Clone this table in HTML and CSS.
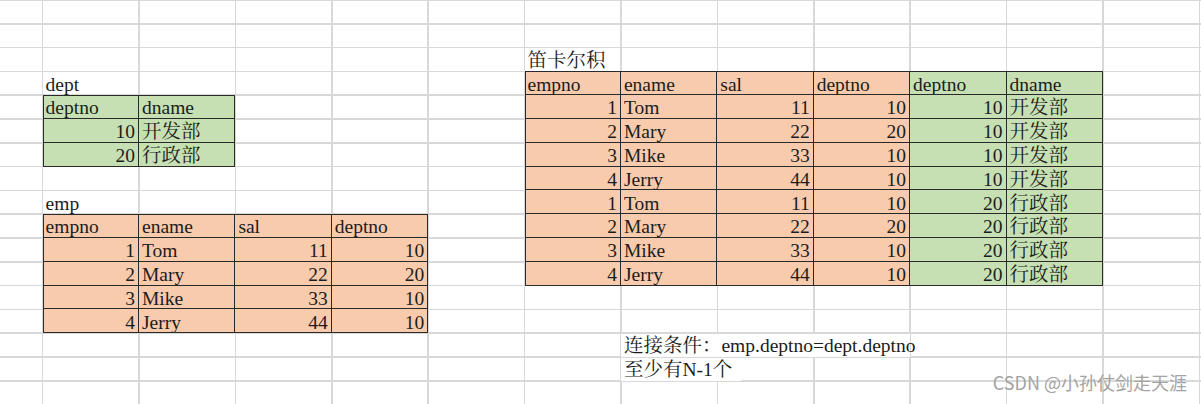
FILE: index.html
```html
<!DOCTYPE html>
<html lang="zh-CN">
<head>
<meta charset="utf-8">
<title>笛卡尔积</title>
<link rel="stylesheet" href="styles.css">
</head>
<body>
<div class="sheet">
  <div class="label lbl-dept">dept</div>
  <div class="tbl tbl-dept">
    <div class="c g">deptno</div><div class="c g">dname</div>
    <div class="c g n">10</div><div class="c g">开发部</div>
    <div class="c g n">20</div><div class="c g">行政部</div>
  </div>

  <div class="label lbl-emp">emp</div>
  <div class="tbl tbl-emp">
    <div class="c o">empno</div><div class="c o">ename</div><div class="c o">sal</div><div class="c o">deptno</div>
    <div class="c o n">1</div><div class="c o">Tom</div><div class="c o n">11</div><div class="c o n">10</div>
    <div class="c o n">2</div><div class="c o">Mary</div><div class="c o n">22</div><div class="c o n">20</div>
    <div class="c o n">3</div><div class="c o">Mike</div><div class="c o n">33</div><div class="c o n">10</div>
    <div class="c o n">4</div><div class="c o">Jerry</div><div class="c o n">44</div><div class="c o n">10</div>
  </div>

  <div class="label lbl-cart">笛卡尔积</div>
  <div class="tbl tbl-cart">
    <div class="c o">empno</div><div class="c o">ename</div><div class="c o">sal</div><div class="c o">deptno</div><div class="c g">deptno</div><div class="c g">dname</div>
    <div class="c o n">1</div><div class="c o">Tom</div><div class="c o n">11</div><div class="c o n">10</div><div class="c g n">10</div><div class="c g">开发部</div>
    <div class="c o n">2</div><div class="c o">Mary</div><div class="c o n">22</div><div class="c o n">20</div><div class="c g n">10</div><div class="c g">开发部</div>
    <div class="c o n">3</div><div class="c o">Mike</div><div class="c o n">33</div><div class="c o n">10</div><div class="c g n">10</div><div class="c g">开发部</div>
    <div class="c o n">4</div><div class="c o">Jerry</div><div class="c o n">44</div><div class="c o n">10</div><div class="c g n">10</div><div class="c g">开发部</div>
    <div class="c o n">1</div><div class="c o">Tom</div><div class="c o n">11</div><div class="c o n">10</div><div class="c g n">20</div><div class="c g">行政部</div>
    <div class="c o n">2</div><div class="c o">Mary</div><div class="c o n">22</div><div class="c o n">20</div><div class="c g n">20</div><div class="c g">行政部</div>
    <div class="c o n">3</div><div class="c o">Mike</div><div class="c o n">33</div><div class="c o n">10</div><div class="c g n">20</div><div class="c g">行政部</div>
    <div class="c o n">4</div><div class="c o">Jerry</div><div class="c o n">44</div><div class="c o n">10</div><div class="c g n">20</div><div class="c g">行政部</div>
  </div>

  <div class="label note note-1">连接条件：emp.deptno=dept.deptno</div>
  <div class="label note note-2">至少有N-1个</div>

  <div class="mark">CSDN @小孙仗剑走天涯</div>
</div>
</body>
</html>
```

FILE: styles.css
```css
* {
  box-sizing: border-box;
}

html, body {
  margin: 0;
  padding: 0;
  background: #ffffff;
}

body {
  font-family: "Liberation Serif", "Noto Serif CJK SC", "Noto Sans CJK SC", serif;
  font-size: 19.5px;
  color: #1c1c1c;
  overflow: hidden;
}

.sheet {
  position: relative;
  width: 1201px;
  height: 404px;
  display: grid;
  grid-template-columns: 42.6px repeat(12, 96.4px) 1fr;
  grid-template-rows: repeat(17, 23.8px);
  background-color: #ffffff;
  background-image:
    repeating-linear-gradient(90deg, transparent 0 41.85px, #d8d8d8 41.85px 43.35px, transparent 43.35px 96.4px),
    repeating-linear-gradient(180deg, #d8d8d8 0 0.75px, transparent 0.75px 23.05px, #d8d8d8 23.05px 23.8px);
}

.label {
  display: flex;
  align-items: flex-end;
  padding: 0 3px 1px;
  line-height: 19.5px;
  white-space: nowrap;
}

.lbl-dept { grid-column: 2; grid-row: 4; }
.lbl-emp { grid-column: 2; grid-row: 9; }
.lbl-cart { grid-column: 7; grid-row: 3; }

.note {
  background: #ffffff;
  margin-top: 1px;
}
.note-1 { grid-column: 8 / 11; grid-row: 15; }
.note-2 { grid-column: 8 / 10; grid-row: 16; padding-right: 0; }
.note-2 { justify-self: start; width: 120px; }

.tbl {
  display: grid;
  grid-template-columns: subgrid;
  grid-template-rows: subgrid;
  outline: 1px solid #2a2a2a;
  outline-offset: -1px;
}

.tbl-dept { grid-column: 2 / 4; grid-row: 5 / 8; }
.tbl-emp { grid-column: 2 / 6; grid-row: 10 / 15; }
.tbl-cart { grid-column: 7 / 13; grid-row: 4 / 13; }

.c {
  display: flex;
  align-items: flex-end;
  padding: 0 3px 0;
  line-height: 19.5px;
  white-space: nowrap;
  overflow: hidden;
  border-right: 1px solid #2a2a2a;
  border-bottom: 1px solid #2a2a2a;
}

.n {
  justify-content: flex-end;
}

.o {
  background: #f8cbad;
}

.g {
  background: #c6e0b4;
}

.mark {
  position: absolute;
  right: 14px;
  bottom: 10px;
  font-family: "Noto Sans CJK SC", "Liberation Sans", sans-serif;
  font-size: 18px;
  line-height: 24px;
  color: #a3a3a3;
  white-space: nowrap;
}
```
